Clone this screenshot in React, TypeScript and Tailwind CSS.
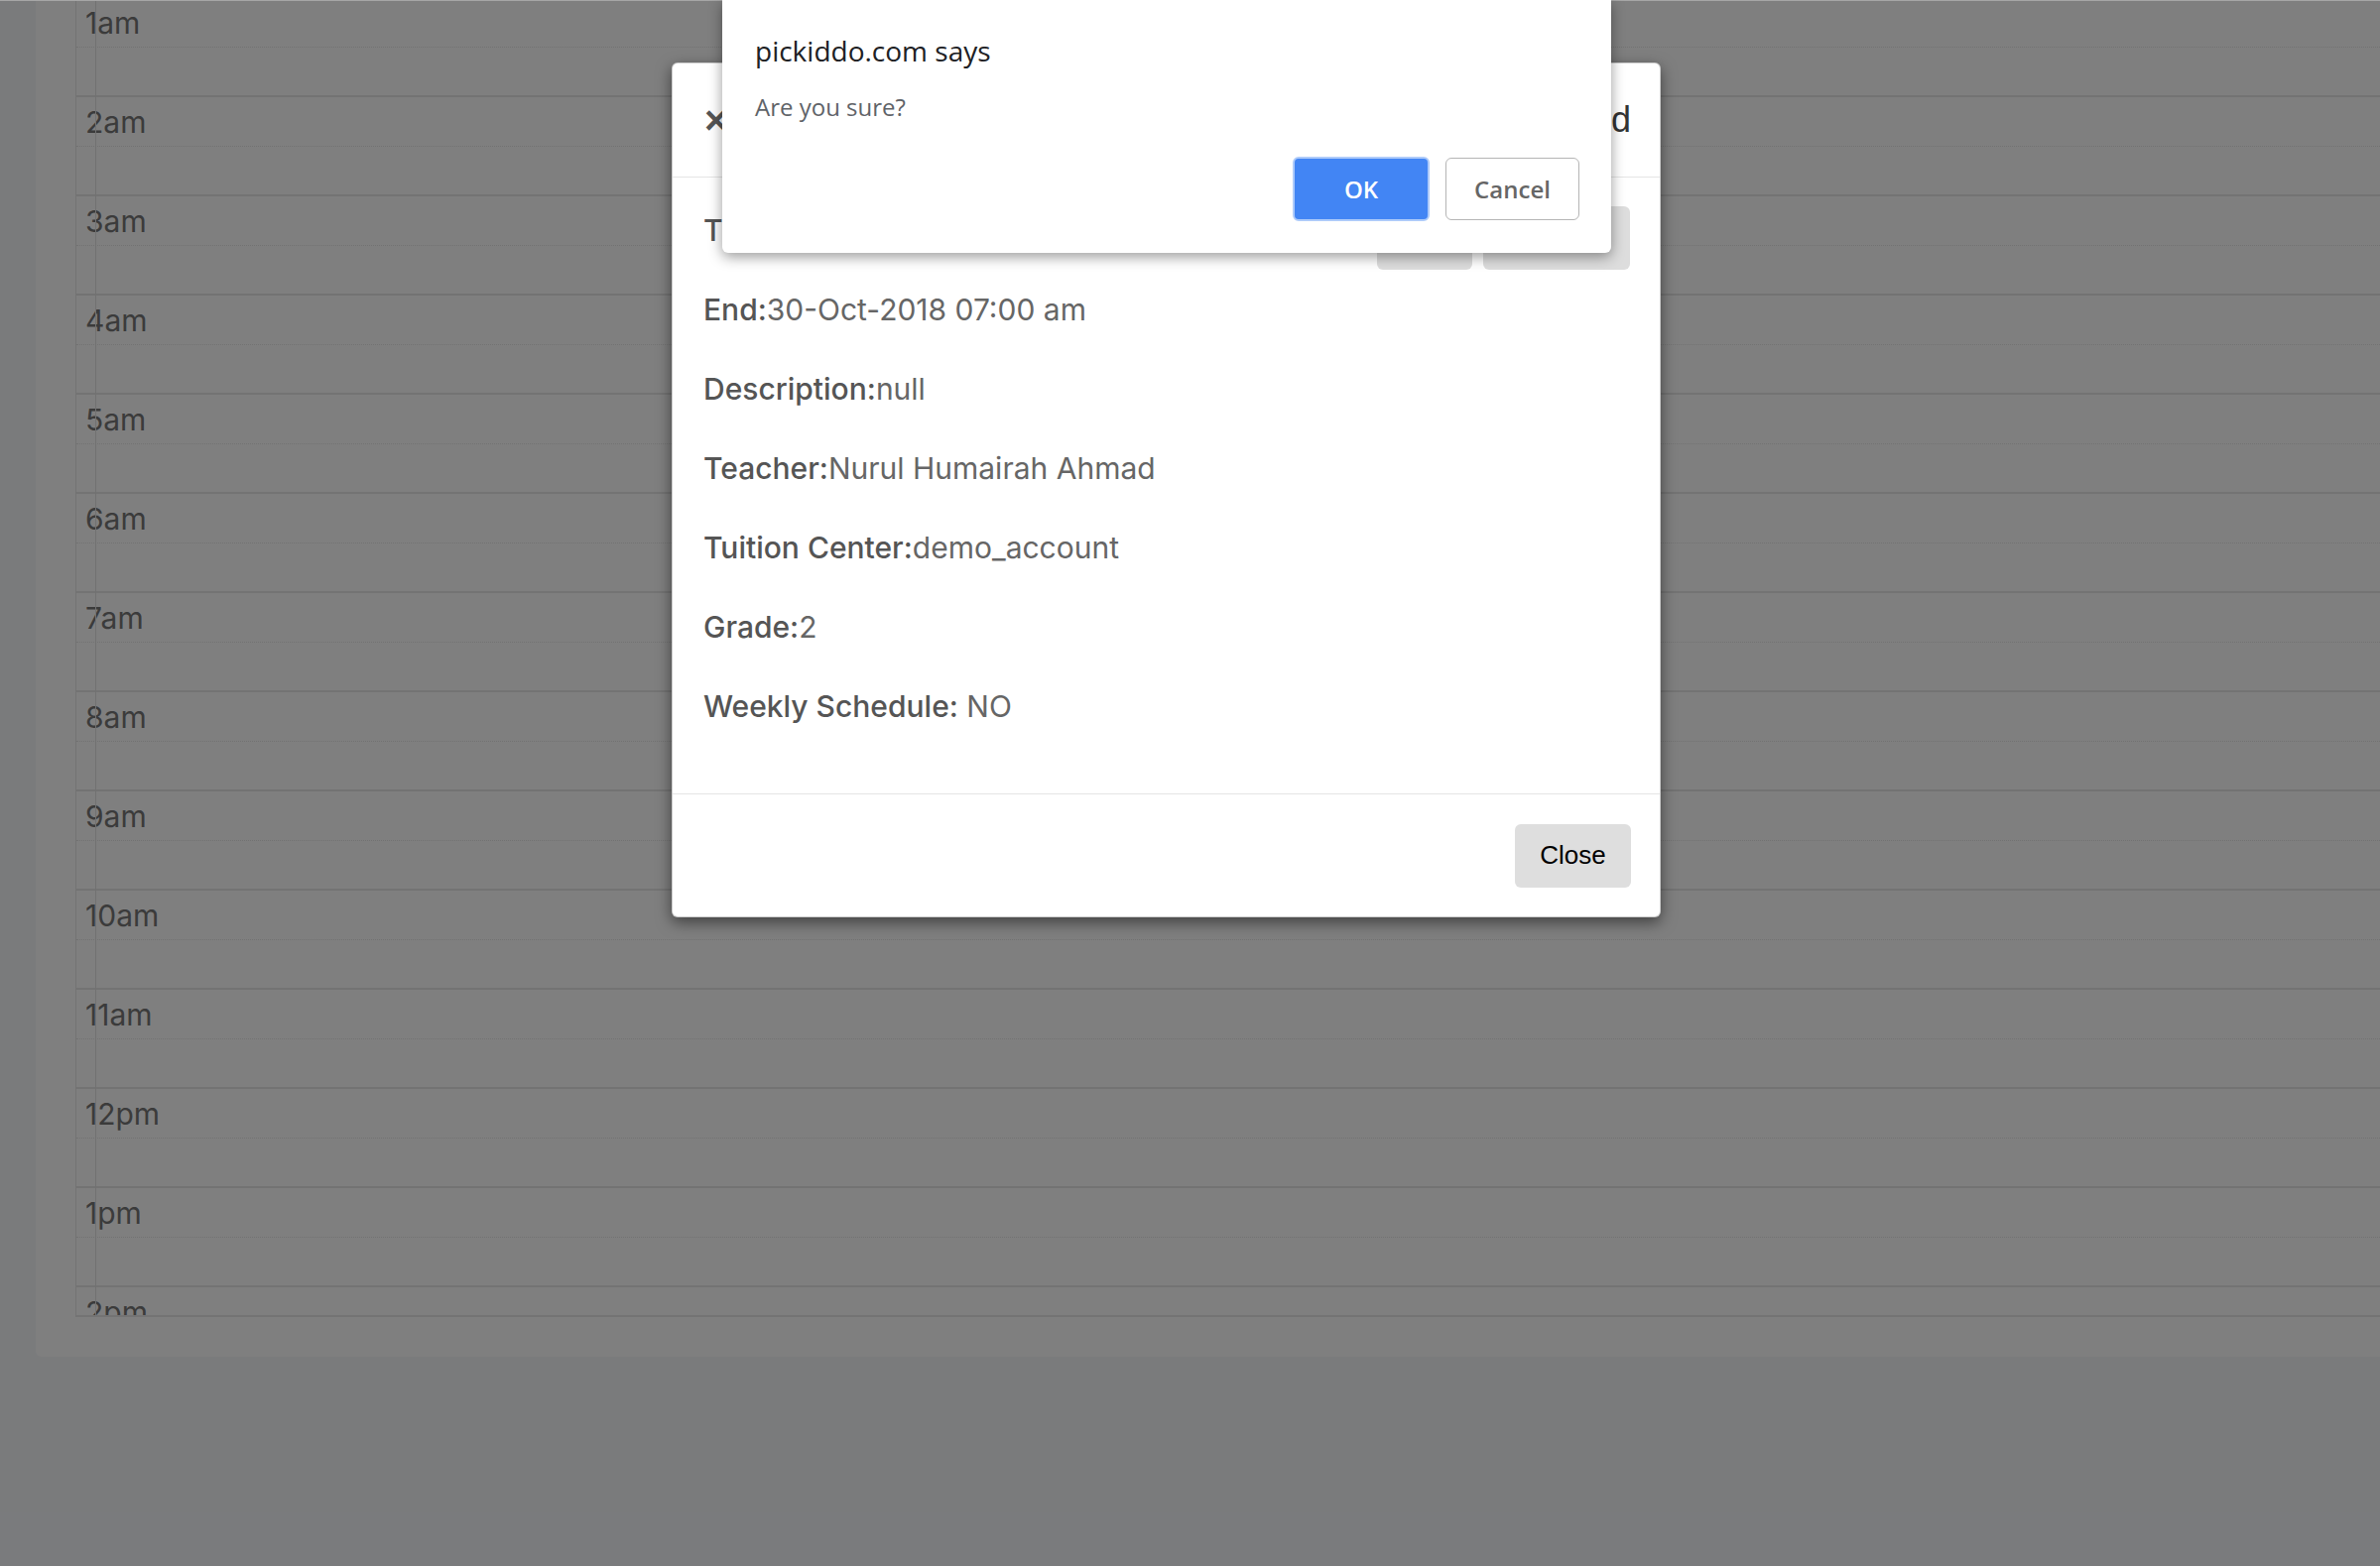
import { FunctionComponent } from "react";

const hours = [
  "1am",
  "2am",
  "3am",
  "4am",
  "5am",
  "6am",
  "7am",
  "8am",
  "9am",
  "10am",
  "11am",
  "12pm",
  "1pm",
  "2pm",
];

const details = [
  { label: "End:", value: "30-Oct-2018 07:00 am" },
  { label: "Description:", value: "null" },
  { label: "Teacher:", value: "Nurul Humairah Ahmad" },
  { label: "Tuition Center:", value: "demo_account" },
  { label: "Grade:", value: "2" },
  { label: "Weekly Schedule:", value: " NO" },
];

const Calendar: FunctionComponent = () => {
  return (
    <div className="ml-[36px] h-[1368px] bg-white rounded-bl-[6px] pl-[40px]">
      <div className="relative h-[1328px] overflow-hidden border-l border-b-2 border-[#e6e6e6] font-['Inter',sans-serif]">
        <div className="absolute top-0 bottom-0 left-[19px] w-px bg-[#e2e2e2]" />
        <div className="-mt-[2px]">
          {hours.map((h) => (
            <div key={h} className="h-[100px] border-b-2 border-[#e6e6e6]">
              <div className="h-[50px] border-b border-dotted border-[#e4e4e4] pl-[9px] pt-[10px] text-[30px] leading-none text-[#777777]">
                {h}
              </div>
            </div>
          ))}
        </div>
      </div>
    </div>
  );
};

const DetailsModal: FunctionComponent = () => {
  return (
    <div className="absolute left-[677px] top-[63px] w-[997px] h-[862px] flex flex-col bg-white rounded-[6px] border border-black/20 shadow-[0_5px_15px_rgba(0,0,0,0.5)]">
      <div className="h-[115px] flex items-center justify-between pl-[32px] pr-[29px] border-b border-[#e5e5e5]">
        <span className="text-[40px] font-bold leading-none text-[#555555] font-['Liberation_Sans',sans-serif]">
          ×
        </span>
        <h4 className="text-[36px] leading-none text-[#333333] font-['Liberation_Sans',sans-serif]">
          Class Booked
        </h4>
      </div>
      <div className="flex-1 pt-[13px] pl-[31px] pr-[30px] font-['Inter',sans-serif] text-[30px] leading-none">
        <div className="h-[80px] flex items-center justify-between">
          <div>
            <span className="font-medium text-[#555555]">Title:</span>
            <span className="text-[#666666]">Mathematics</span>
          </div>
          <div className="flex gap-[11px] mt-[16px] font-['Liberation_Sans',sans-serif] text-[24px] text-[#333333]">
            <div className="w-[96px] h-[64px] rounded-[6px] bg-[#dddddd] flex items-center justify-center">
              Edit
            </div>
            <div className="w-[148px] h-[64px] rounded-[6px] bg-[#dddddd] flex items-center justify-center">
              Delete
            </div>
          </div>
        </div>
        {details.map((d) => (
          <div key={d.label} className="h-[80px] flex items-center whitespace-pre">
            <span className="font-medium text-[#555555]">{d.label}</span>
            <span className="text-[#666666]">{d.value}</span>
          </div>
        ))}
      </div>
      <div className="h-[124px] flex items-center justify-end pr-[29px] border-t border-[#e5e5e5]">
        <button className="w-[117px] h-[64px] rounded-[6px] bg-[#dedede] text-[26px] text-black font-['Liberation_Sans',sans-serif]">
          Close
        </button>
      </div>
    </div>
  );
};

const ConfirmDialog: FunctionComponent = () => {
  return (
    <div className="absolute left-[728px] top-0 w-[896px] h-[255px] flex flex-col bg-white rounded-b-[6px] shadow-[0_4px_14px_rgba(0,0,0,0.4)] pl-[33px] pr-[32px] font-['Open_Sans',sans-serif]">
      <div className="mt-[37px] text-[28px] leading-none text-[#202124]">pickiddo.com says</div>
      <div className="mt-[31px] text-[24px] leading-none text-[#5f6368]">Are you sure?</div>
      <div className="mt-[38px] flex justify-end gap-[16px]">
        <button className="w-[138px] h-[65px] rounded-[6px] bg-[#4285f4] border-2 border-[#aecbfa] text-white text-[24px] font-semibold">
          OK
        </button>
        <button className="w-[135px] h-[63px] mt-px rounded-[6px] bg-white border border-[#b5b5b5] text-[#666666] text-[24px] font-semibold">
          Cancel
        </button>
      </div>
    </div>
  );
};

export default function App() {
  return (
    <div className="relative w-[2399px] h-[1579px] overflow-hidden bg-[#f4f6f9]">
      <Calendar />
      <div className="absolute inset-0 bg-black/50" />
      <div className="absolute top-0 left-0 right-0 h-px bg-[#a6a6a6]" />
      <DetailsModal />
      <ConfirmDialog />
    </div>
  );
}
